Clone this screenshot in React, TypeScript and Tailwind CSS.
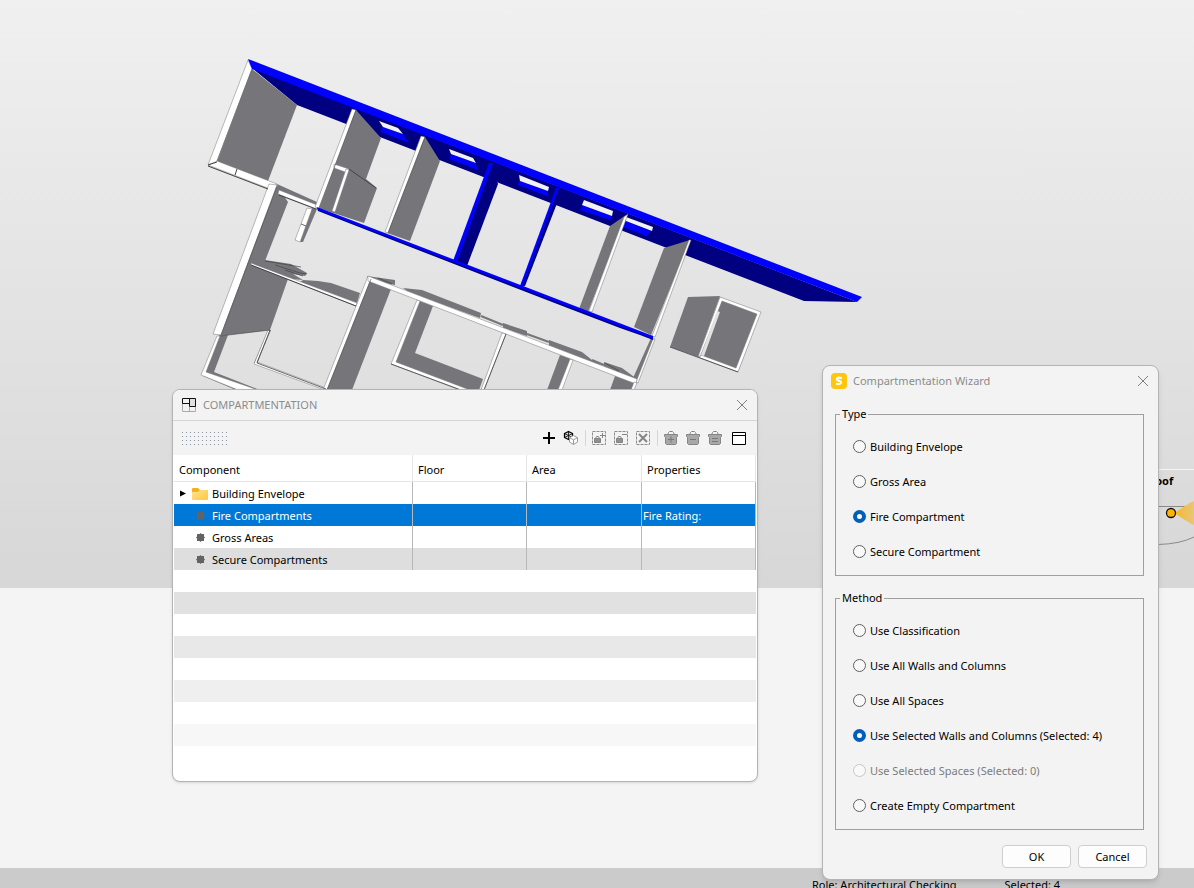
import React, { useState } from 'react';

const WALL = '#76757a';
const NAVY = '#000080';
const BLUE = '#0000ff';

// shaded wall faces, the slabs below are the white top edges
const faces = [
  "252,69 297,105 268,181 217,162",
  "356,110 381,138 366,179 377,188 364,223 318,208 335,164",
  "425,137 440,161 410,241 387,233",
  "626,215 610,226 579,309 588,312",
  "690,240 664,248 634,327 651,335",
  "651,338 654,339 637,381 633,378",
  "277,184 317,202 318,209 278,193",
  "277,186 288,202 265,261 288,279 270,330 219,336",
  "265,260 291,264 307,273 305,276 293,274 303,280 290,279 265,269",
  "303,280 318,281 331,283 360,293 357,303 300,282",
  "312,208 317,209 303,242 300,242",
  "218,336 228,335 214,372 260,390 236,390 203,376",
  "268,330 271,330 257,363 254,363",
  "369,279 391,289 352,390 325,390",
  "367,276 395,280 395,285 370,280",
  "403,288 422,290 481,313 480,318 410,293",
  "503,323 527,331 527,336 503,328",
  "549,340 582,352 592,360 604,367 604,362 622,368 637,379 637,382 549,347",
  "420,301 433,306 415,353 483,379 479,390 463,390 393,364",
  "560,355 571,359 558,390 547,390",
  "615,376 635,383 631,390 610,390",
  "688,297 720,296 698,357 670,347",
  "720,297 760,313 738,372 698,357"
];

const slabs = [
  "248,60 252,69 217,162 208,165",
  "208,165 217,161 277,184 270,189",
  "269,184 277,185 221,335 213,334",
  "279,190 317,205 316,209 278,194",
  "352,109 356,110 319,209 315,207",
  "334,164 349,169 348,173 334,168",
  "346,169 349,170 335,212 332,211",
  "421,136 425,137 388,233 385,232",
  "624,217 628,214 592,312 589,311",
  "689,240 691,240 655,337 652,336",
  "653,339 655,339 638,383 636,382",
  "307,208 312,209 300,242 295,240",
  "251,263 357,303 356,306 251,265",
  "217,336 220,336 206,372 258,390 238,390 201,375",
  "268,330 270,331 257,362 326,388 325,390 254,364",
  "368,276 371,279 327,390 323,390",
  "368,276 637,379 636,384 368,281",
  "417,300 420,301 396,362 470,390 460,390 391,364",
  "502,333 506,334 484,390 481,390",
  "570,359 573,360 562,390 558,390",
  "634,382 637,383 634,390 631,390",
  "720,297 761,312 738,372 698,357 701,355 736,368 757,314 722,301 700,357 698,357"
];

const windows = [
  { hole: "379,121 398,128 403,134 383,127", sill: "382,127 403,134 409,143 381,132" },
  { hole: "449,149 473,158 476,163 451,154", sill: "451,154 475,162 478,170 449,159" },
  { hole: "519,175 549,187 548,191 520,181", sill: "519,180 548,190 547,196 518,185" },
  { hole: "584,200 613,211 612,216 582,205", sill: "583,205 612,216 610,220 580,210" },
  { hole: "626,217 653,227 652,231 626,221", sill: "625,221 651,231 647,236 623,227" }
];

const BuildingModel = () => (
  <svg className="block" width="1194" height="588" viewBox="0 0 1194 588" aria-hidden="true">
    <polygon points="252,68 857,302 804,301 297,105" fill={NAVY} />
    {windows.map((w) => (
      <g key={w.hole}>
        <polygon points={w.sill} fill={BLUE} />
        <polygon points={w.hole} fill="#f2f2f2" />
      </g>
    ))}
    <polygon points="491,163 498,184 467,266 455,262" fill={NAVY} />
    {faces.map((points) => (
      <polygon key={points} points={points} fill={WALL} />
    ))}
    {slabs.map((points) => (
      <polygon key={points} points={points} fill="#fff" stroke="#77777a" strokeWidth="0.5" />
    ))}
    <polygon points="717,311 720,312 704,356 701,355" fill="#e2e2e2" />
    <g fill="none" stroke="#444" strokeWidth="1">
      <path d="M208 166L268 189M217 162L208 165M237 169l-2 6M279 195l37 14M349 169l27 19M251 265l105 41" />
      <path d="M371 279L327 390M277 186L221 335M252 69L217 161M356 110L319 208M425 137L388 233M220 336L270 330" strokeWidth="0.6" />
      <path d="M670 347l68 25M301 224l5 2M270 330l-13 33 69 26M391 364l70 26M506 334l-22 56" strokeWidth="0.8" />
      <path d="M265 261l36 6M275 265l25 8 7 1M285 270l18 6M378 278l14 6M605 363l14 8" strokeWidth="0.7" />
    </g>
    <path d="M481 316l22 9M527 334l22 8M592 360l12 5" stroke={WALL} strokeWidth="2" />
    <polygon points="559,187 561,193 525,286 520,287" fill={NAVY} />
    <polygon points="556,188 559,188 523,286 520,286" fill={BLUE} />
    <polygon points="489,163 493,163 457,262 453,261" fill={BLUE} />
    <polygon points="317,208 653,337 653,340 640,335 620,328 565,307 400,243 318,211" fill={NAVY} />
    <polygon points="317,207 653,336 653,339 318,210" fill={BLUE} />
    <polygon points="248,59 862,297 857,302 252,69" fill={BLUE} />
  </svg>
);

const NavigationMap = () => (
  <svg className="absolute left-[1140px] top-[460px]" width="54" height="100" viewBox="0 0 54 100">
    <defs>
      <linearGradient id="beam">
        <stop offset="0" stopColor="#f7b924" />
        <stop offset="1" stopColor="#e6c67c" />
      </linearGradient>
    </defs>
    <path d="M0 9.500h54" stroke="#f4f4f4" />
    <text x="8" y="25" className="font-bold text-[11px]">Roof</text>
    <path d="M0 46.500h54M18 84.500Q40 84 54 77" fill="none" stroke="#8a8a8a" />
    <path d="M34 53L53 41l1 1v22l-1 1z" fill="url(#beam)" />
    <circle cx="31" cy="53" r="4.500" fill="#ffb300" stroke="#111" strokeWidth="1.300" />
  </svg>
);

const CloseIcon = () => (
  <svg width="12" height="12" viewBox="0 0 12 12" fill="none" stroke="#808080">
    <path d="M1 1l10 10M11 1L1 11" />
  </svg>
);

const CompartmentIcon = () => (
  <svg width="14" height="14" viewBox="0 0 14 14" fill="none">
    <path d="M.5 5v8.500h13V8M7.500 9v4" stroke="#aaa" />
    <path d="M8 1h5v7H8z" fill="#e0e0e0" />
    <path d="M.5 5.500v-5h13v8h-6v-3h-7M7.500 0v6" stroke="#111" />
  </svg>
);

const PlusIcon = () => (
  <svg width="16" height="16" viewBox="0 0 16 16"><path d="M8 2v12M2 8h12" stroke="#000" strokeWidth="2" /></svg>
);

const CubesIcon = () => (
  <svg width="16" height="16" viewBox="0 0 16 16" strokeLinejoin="round">
    <path d="M5.500 1.500L9.500 3.500V7.500L5.500 9.500L1.500 7.500V3.500z" fill="#ddd" stroke="#000" strokeWidth="1.300" />
    <path d="M1.500 3.500l4 2 4-2M5.500 1.500v8M1.500 7.500l4-2 4 2" fill="none" stroke="#000" strokeWidth="0.800" />
    <path d="M10.500 5.500l4 2.200v4.300l-4 2.500-4-2.500V7.700z" fill="#fff" stroke="#999" />
    <path d="M6.500 7.700l4 2.100 4-2.100M10.500 9.800v4.500" fill="none" stroke="#999" />
  </svg>
);

const DashedBox = () => (
  <path d="M1.500 1.500h13v13h-13z" fill="none" stroke="#8c8c8c" strokeDasharray="3 1" />
);

const SmallBasket = () => (
  <g stroke="#858585">
    <path d="M4.500 8.500l1-2h2l1 2" fill="none" />
    <path d="M3.500 8.500h6v4h-6z" fill="#909090" />
  </g>
);

const AddSelectedIcon = () => (
  <svg width="16" height="16" viewBox="0 0 16 16">
    <DashedBox /><SmallBasket /><path d="M11.500 3v5M9 5.500h5" stroke="#858585" />
  </svg>
);

const RemoveSelectedIcon = () => (
  <svg width="16" height="16" viewBox="0 0 16 16">
    <DashedBox /><SmallBasket /><path d="M9 4.500h5" stroke="#858585" />
  </svg>
);

const ClearIcon = () => (
  <svg width="16" height="16" viewBox="0 0 16 16">
    <DashedBox /><path d="M4 4l8 8M12 4l-8 8" stroke="#858585" strokeWidth="2" />
  </svg>
);

const BasketIcon = ({ mark }: { mark: string }) => (
  <svg width="16" height="16" viewBox="0 0 16 16">
    <path d="M4.500 5l1-2.500 1-1h3l1 1 1 2.500" fill="none" stroke="#858585" />
    <path d="M1.500 4.500h13v2l-1 1v6l-1 1h-9l-1-1v-6l-1-1z" fill="#a8a8a8" stroke="#858585" />
    <path d={mark} stroke="#777" />
  </svg>
);

const WindowIcon = () => (
  <svg width="16" height="16" viewBox="0 0 16 16">
    <path d="M1.500 2.500h13v12h-13z" fill="#fff" stroke="#000" />
    <path d="M1 5.500h14" stroke="#000" />
  </svg>
);

const FolderIcon = () => (
  <svg width="16" height="14" viewBox="0 0 16 14">
    <defs>
      <linearGradient id="folder" x1="0" y1="0" x2="1" y2="1">
        <stop offset="0" stopColor="#ffe394" />
        <stop offset="1" stopColor="#ffc73c" />
      </linearGradient>
    </defs>
    <path d="M0 2q0-1 1-1h5l2 2h7q1 0 1 1v3H0z" fill="#f7b01c" />
    <path d="M0 5h6l2-2h7q1 0 1 1v8q0 1-1 1H1q-1 0-1-1z" fill="url(#folder)" />
  </svg>
);

const DotIcon = () => (
  <svg width="9" height="9" viewBox="0 0 9 9">
    <path d="M4.500 0L5.500 1H8v2.500L9 4.500 8 5.500V8H5.500L4.500 9 3.500 8H1V5.500L0 4.500 1 3.500V1h2.500z" fill="#636363" />
  </svg>
);

const tools = [
  { label: "Add", icon: <PlusIcon /> },
  { label: "Add component", icon: <CubesIcon />, divider: true },
  { label: "Add selected", icon: <AddSelectedIcon />, disabled: true },
  { label: "Remove selected", icon: <RemoveSelectedIcon />, disabled: true },
  { label: "Clear", icon: <ClearIcon />, disabled: true, divider: true },
  { label: "Add to basket", icon: <BasketIcon mark="M8 6.500v6M5 9.500h6" />, disabled: true },
  { label: "Remove from basket", icon: <BasketIcon mark="M5 9.500h6" />, disabled: true },
  { label: "Set to basket", icon: <BasketIcon mark="M5 8.500h6M5 11.500h6" />, disabled: true }
];

const rows = [
  { name: "Building Envelope", folder: true, properties: "" },
  { name: "Fire Compartments", properties: "Fire Rating:" },
  { name: "Gross Areas", properties: "" },
  { name: "Secure Compartments", properties: "" }
];

const fillerRows = ["bg-white", "bg-[#e1e1e1]", "bg-white", "bg-[#e8e8e8]", "bg-white", "bg-[#efefef]", "bg-white", "bg-[#f7f7f7]"];

const CompartmentationWindow = () => {
  const [selected, setSelected] = useState("Fire Compartments");

  return (
    <section className="absolute left-[172px] top-[389px] flex h-[393px] w-[586px] flex-col overflow-hidden rounded-lg border border-[#b4b4b4] bg-white shadow-sm">
      <header className="flex h-[31px] shrink-0 items-center border-b border-[#d5d5d5] bg-[#f3f3f3] pl-[9px] pr-[9px]">
        <CompartmentIcon />
        <h2 className="ml-[7px] flex-1 text-[#8c8c8c]">COMPARTMENTATION</h2>
        <button aria-label="Close"><CloseIcon /></button>
      </header>
      <div className="flex h-[34px] shrink-0 items-center bg-[#f3f3f3] pl-[8px] pr-[10px]">
        <svg width="48" height="16" viewBox="0 0 48 16">
          <path d="M1 2.500h47M1 6.500h47M1 10.500h47M1 14.500h47" stroke="#8893a0" strokeDasharray="1 3" />
        </svg>
        <div className="ml-auto flex items-center gap-[6px]">
          {tools.map((tool) => (
            <React.Fragment key={tool.label}>
              <button aria-label={tool.label} disabled={tool.disabled}>{tool.icon}</button>
              {tool.divider && <span className="-mr-px h-4 w-px bg-[#d5d5d5]" />}
            </React.Fragment>
          ))}
          <button aria-label="Show window" className="ml-[2px]"><WindowIcon /></button>
        </div>
      </div>
      <div className="px-px">
        <table className="w-full table-fixed border-separate border-spacing-0">
          <colgroup>
            <col className="w-[239px]" />
            <col className="w-[114px]" />
            <col className="w-[115px]" />
            <col />
          </colgroup>
          <thead>
            <tr className="h-[27px] text-left">
              {["Component", "Floor", "Area", "Properties"].map((title) => (
                <th key={title} className="border-b border-r border-[#e5e5e5] pb-0 pl-[5px] pt-[3px] font-normal">{title}</th>
              ))}
            </tr>
          </thead>
          <tbody>
            {rows.map((row) => (
              <tr
                key={row.name}
                onClick={() => setSelected(row.name)}
                className={row.name === selected ? "h-[22px] bg-[#0078d7] text-white" : "h-[22px] bg-white [&:nth-child(4)]:bg-[#dedede]"}
              >
                <td className="border-r border-[#b8b8b8] p-0">
                  <div className="flex h-[22px] items-center pl-[6px] pt-px">
                    <span className="w-3 text-black">
                      {row.folder && <svg width="6" height="7" viewBox="0 0 6 7"><path d="M0 .5l6 3-6 3z" /></svg>}
                    </span>
                    <span className="mr-1 flex w-4 justify-center">{row.folder ? <FolderIcon /> : <DotIcon />}</span>
                    {row.name}
                  </div>
                </td>
                <td className="border-r border-[#b8b8b8] p-0" />
                <td className="border-r border-[#b8b8b8] p-0" />
                <td className="border-r border-[#b8b8b8] pb-0 pl-px pr-0 pt-px">{row.properties}</td>
              </tr>
            ))}
            {fillerRows.map((color, index) => (
              <tr key={index} className={`h-[22px] ${color}`}>
                <td colSpan={4} className="p-0" />
              </tr>
            ))}
          </tbody>
        </table>
      </div>
    </section>
  );
};

const types = ["Building Envelope", "Gross Area", "Fire Compartment", "Secure Compartment"];

const methods = [
  "Use Classification",
  "Use All Walls and Columns",
  "Use All Spaces",
  "Use Selected Walls and Columns (Selected: 4)",
  "Use Selected Spaces (Selected: 0)",
  "Create Empty Compartment"
];

type RadioGroupProps = {
  title: string;
  options: string[];
  initial: string;
  disabled?: string;
};

const RadioGroup = ({ title, options, initial, disabled }: RadioGroupProps) => {
  const [value, setValue] = useState(initial);

  return (
    <fieldset className="border border-[#9f9f9f] pb-[6px] pl-[17px] pt-[7px]">
      <legend className="-ml-[13px] px-[2px] leading-4">{title}</legend>
      {options.map((option) => (
        <label key={option} className={option === disabled ? "flex h-[35px] items-center gap-1 text-[#7c7c7c]" : "flex h-[35px] items-center gap-1"}>
          <input
            type="radio"
            name={title}
            checked={value === option}
            disabled={option === disabled}
            onChange={() => setValue(option)}
            className="size-[13px] appearance-none rounded-full border border-[#606060] bg-[#f9f9f9] checked:border-4 checked:border-[#005fb8] checked:bg-white disabled:border-[#c5c5c5]"
          />
          {option}
        </label>
      ))}
    </fieldset>
  );
};

const WizardDialog = () => (
  <section role="dialog" aria-label="Compartmentation Wizard" className="absolute left-[822px] top-[365px] flex w-[337px] flex-col rounded-lg border border-[#b4b4b4] bg-[#f3f3f3] shadow-md">
    <header className="flex h-[29px] items-center pl-2 pr-[9px]">
      <svg width="16" height="16" viewBox="0 0 16 16">
        <rect width="16" height="16" rx="4" fill="#ffc60b" />
        <path d="M10.800 5.300Q8.500 4.300 6.900 4.700Q5.200 5.400 6.200 6.900Q7 7.600 8.600 8Q10.600 8.800 9.700 10.300Q8 11.800 5 10.500" fill="none" stroke="#fff" strokeWidth="2.200" />
      </svg>
      <h2 className="ml-[6px] flex-1 text-[#8c8c8c]">Compartmentation Wizard</h2>
      <button aria-label="Close"><CloseIcon /></button>
    </header>
    <div className="flex flex-col gap-[14px] pl-3 pr-[14px] pt-[11px]">
      <RadioGroup title="Type" options={types} initial="Fire Compartment" />
      <RadioGroup
        title="Method"
        options={methods}
        initial="Use Selected Walls and Columns (Selected: 4)"
        disabled="Use Selected Spaces (Selected: 0)"
      />
    </div>
    <footer className="flex justify-end gap-[7px] pb-[11px] pr-[11px] pt-[15px]">
      <button className="h-[23px] w-[69px] rounded border border-[#cfcfcf] bg-[#fdfdfd]">OK</button>
      <button className="h-[23px] w-[69px] rounded border border-[#cfcfcf] bg-[#fdfdfd]">Cancel</button>
    </footer>
  </section>
);

const App = () => {
  return (
    <div className="relative flex h-screen flex-col overflow-hidden bg-[#f4f4f4] font-['Noto_Sans','Open_Sans',sans-serif] text-[11px] leading-4 text-black">
      <main className="h-[588px] shrink-0 overflow-hidden bg-linear-to-b from-[#f0f0f0] to-[#d7d7d7]">
        <BuildingModel />
        <NavigationMap />
      </main>
      <div className="flex-1" />
      <footer className="flex h-5 shrink-0 gap-12 overflow-hidden bg-[#cbcbcb] pl-[812px] pt-[9px]">
        <span>Role: Architectural Checking</span>
        <span>Selected: 4</span>
      </footer>
      <CompartmentationWindow />
      <WizardDialog />
    </div>
  );
};

export default App;
